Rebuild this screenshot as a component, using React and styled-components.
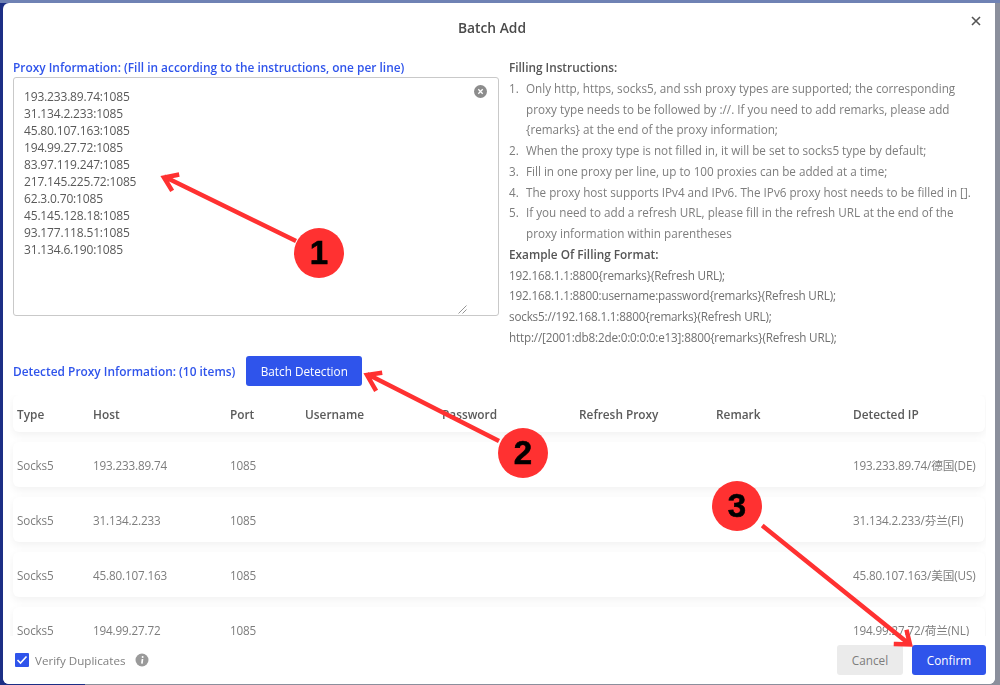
import React from "react";
import styled, { createGlobalStyle } from "styled-components";

const Global = createGlobalStyle`
  html, body { margin: 0; padding: 0; width: 1000px; height: 685px; overflow: hidden; }
  * { box-sizing: border-box; }
  body { font-family: "Open Sans", "Noto Sans CJK SC", sans-serif; font-size: 12px; }
`;

const Backdrop = styled.div`
  position: relative;
  width: 1000px;
  height: 685px;
  padding: 3px 5px 1px 3px;
  background: linear-gradient(90deg, #1c2f85 0, #1c2f85 85px, #8b8f9c 85px, #8b8f9c 100%);
  overflow: hidden;
`;

const TopEdge = styled.div`
  position: absolute;
  left: 0;
  top: 0;
  width: 100%;
  height: 3px;
  background: #6f82b4;
`;

const Dialog = styled.div`
  position: relative;
  height: 100%;
  display: flex;
  flex-direction: column;
  background: #fff;
  border-radius: 6px 0 6px 6px;
  overflow: hidden;
  filter: blur(0.3px);
`;

const Header = styled.header`
  flex: none;
  height: 54px;
  display: flex;
  align-items: center;
  justify-content: center;
  padding-right: 14px;
  padding-bottom: 6px;
`;

const Title = styled.h2`
  margin: 0;
  font-size: 13.8px;
  font-weight: 600;
  color: #4a4a4a;
`;

const CloseButton = styled.button`
  position: absolute;
  top: 11px;
  right: 12px;
  width: 14px;
  height: 14px;
  padding: 0;
  border: 0;
  background: none;
  display: flex;
  color: #555;
`;

const Body = styled.div`
  flex: none;
  display: flex;
  flex-direction: column;
  padding: 0 9px 0 10px;
`;

const TopGrid = styled.div`
  display: grid;
  grid-template-columns: 486px 1fr;
  column-gap: 10px;
  height: 300px;
`;

const InputColumn = styled.div`
  display: flex;
  flex-direction: column;
`;

const BlueLabel = styled.label`
  font-size: 11.9px;
  font-weight: 600;
  line-height: 20px;
  color: #2f54eb;
  white-space: nowrap;
`;

const TextareaWrap = styled.div`
  position: relative;
  display: flex;
`;

const ProxyInput = styled.textarea`
  width: 486px;
  height: 239px;
  padding: 10px;
  border: 1px solid #c9c9c9;
  border-radius: 3px;
  outline: none;
  resize: none;
  font: 12px/17px "Open Sans", sans-serif;
  letter-spacing: -0.17px;
  color: #595959;
  background: #fff;
  overflow: hidden;
`;

const ClearIcon = styled.span`
  position: absolute;
  top: 8px;
  right: 12px;
  display: flex;
`;

const ResizeGrip = styled.span`
  position: absolute;
  right: 32px;
  bottom: 2px;
  display: flex;
`;

const Instructions = styled.div`
  font-size: 11.7px;
  line-height: 20.75px;
  color: #7d7d7d;
  white-space: nowrap;
`;

const InfoHeading = styled.div`
  font-weight: 600;
  font-size: 11.8px;
  color: #555;
`;

const InfoList = styled.ol`
  margin: 0;
  padding: 0;
  list-style: none;
`;

const InfoItem = styled.li`
  display: flex;
`;

const ItemNumber = styled.span`
  flex: none;
  width: 17px;
`;

const ItemText = styled.span`
  white-space: normal;
  width: 450px;
`;

const ExampleLine = styled.div`
  font-size: 11.7px;
  letter-spacing: -0.18px;
  color: #707070;
`;

const DetectBar = styled.div`
  display: flex;
  align-items: center;
  gap: 11px;
  height: 30px;
  margin-top: -1px;
`;

const PrimaryButton = styled.button`
  width: ${(p) => p.$width}px;
  height: 30px;
  border: 0;
  border-radius: 3px;
  background: #2f54eb;
  color: #fff;
  font: 11.75px "Open Sans", sans-serif;
  padding: 0;
`;

const TableClip = styled.div`
  margin-top: 9px;
  height: 260px;
  margin-left: -3px;
  padding: 0 0 0 3px;
  overflow: hidden;
  display: flex;
  flex-direction: column;
  gap: 10px;
`;

const Row = styled.div`
  flex: none;
  width: 972px;
  height: ${(p) => (p.$head ? 37 : 45)}px;
  padding-left: 4px;
  display: grid;
  grid-template-columns: 76px 137px 75px 137px 137px 137px 137px 1fr;
  align-items: center;
  border-radius: 6px;
  background: #fff;
  box-shadow: 0 3px 8px rgba(0, 0, 0, 0.06);
  color: ${(p) => (p.$head ? "#5a5a5a" : "#7d7d7d")};
  font-weight: ${(p) => (p.$head ? 600 : 400)};
  font-size: ${(p) => (p.$head ? 11.85 : 11.7)}px;
  letter-spacing: ${(p) => (p.$head ? 0 : -0.15)}px;
  white-space: nowrap;
`;

const Footer = styled.footer`
  position: absolute;
  left: 0;
  right: 0;
  bottom: 0;
  height: 48px;
  padding: 0 9px 0 12px;
  background: #fff;
  display: flex;
  align-items: center;
  justify-content: space-between;
`;

const VerifyLabel = styled.div`
  display: flex;
  align-items: center;
  color: #808080;
  font-size: 11.6px;
`;

const Check = styled.span`
  width: 14px;
  height: 14px;
  margin-right: 6px;
  background: #2f54eb;
  border-radius: 1px;
  display: flex;
`;

const InfoDot = styled.span`
  margin-left: 10px;
  display: flex;
`;

const Actions = styled.div`
  display: flex;
  gap: 9px;
`;

const CancelButton = styled.button`
  width: 66px;
  height: 30px;
  border: 0;
  border-radius: 3px;
  background: #ebebeb;
  color: #7d7d7d;
  font: 11.75px "Open Sans", sans-serif;
  padding: 0;
`;

const Arrows = styled.svg`
  position: absolute;
  left: 0;
  top: 0;
  pointer-events: none;
`;

const Badge = styled.div`
  position: absolute;
  left: ${(p) => p.$x - 25}px;
  top: ${(p) => p.$y - 25}px;
  width: 50px;
  height: 50px;
  border-radius: 50%;
  background: #ff3131;
  color: #000;
  display: flex;
  align-items: center;
  justify-content: center;
  font: 700 33px "Liberation Sans", Arial, sans-serif;
  -webkit-text-stroke: 0.6px #000;
`;

const proxies = [
  "193.233.89.74:1085", "31.134.2.233:1085", "45.80.107.163:1085", "194.99.27.72:1085",
  "83.97.119.247:1085", "217.145.225.72:1085", "62.3.0.70:1085", "45.145.128.18:1085",
  "93.177.118.51:1085", "31.134.6.190:1085",
].join("\n");

const rows = [
  ["193.233.89.74", "193.233.89.74/德国(DE)"],
  ["31.134.2.233", "31.134.2.233/芬兰(FI)"],
  ["45.80.107.163", "45.80.107.163/美国(US)"],
  ["194.99.27.72", "194.99.27.72/荷兰(NL)"],
];

const items = [
  "Only http, https, socks5, and ssh proxy types are supported; the corresponding proxy type needs to be followed by ://. If you need to add remarks, please add {remarks} at the end of the proxy information;",
  "When the proxy type is not filled in, it will be set to socks5 type by default;",
  "Fill in one proxy per line, up to 100 proxies can be added at a time;",
  "The proxy host supports IPv4 and IPv6. The IPv6 proxy host needs to be filled in [].",
  "If you need to add a refresh URL, please fill in the refresh URL at the end of the proxy information within parentheses",
];

export default function App() {
  return (
    <>
      <Global />
      <Backdrop>
        <TopEdge />
        <Dialog>
          <Header>
            <Title>Batch Add</Title>
            <CloseButton aria-label="Close">
              <svg width="14" height="14" viewBox="0 0 14 14">
                <path d="M3 3l8 8M11 3l-8 8" stroke="currentColor" strokeWidth="1.6" fill="none" />
              </svg>
            </CloseButton>
          </Header>
          <Body>
            <TopGrid>
              <InputColumn>
                <BlueLabel>Proxy Information: (Fill in according to the instructions, one per line)</BlueLabel>
                <TextareaWrap>
                  <ProxyInput readOnly value={proxies} />
                  <ClearIcon>
                    <svg width="13" height="13" viewBox="0 0 13 13">
                      <circle cx="6.5" cy="6.5" r="6.5" fill="#8c8c8c" />
                      <path d="M4.3 4.3l4.4 4.4M8.7 4.3l-4.4 4.4" stroke="#fff" strokeWidth="1.3" />
                    </svg>
                  </ClearIcon>
                  <ResizeGrip>
                    <svg width="9" height="9" viewBox="0 0 9 9">
                      <path d="M0.5 8.5l8-8M4.5 8.5l4-4" stroke="#8a8a8a" strokeWidth="0.9" fill="none" />
                    </svg>
                  </ResizeGrip>
                </TextareaWrap>
              </InputColumn>
              <Instructions>
                <InfoHeading>Filling Instructions:</InfoHeading>
                <InfoList>
                  {items.map((t, i) => (
                    <InfoItem key={i}>
                      <ItemNumber>{i + 1}.</ItemNumber>
                      <ItemText>{t}</ItemText>
                    </InfoItem>
                  ))}
                </InfoList>
                <InfoHeading>Example Of Filling Format:</InfoHeading>
                <ExampleLine>192.168.1.1:8800{"{remarks}"}(Refresh URL);</ExampleLine>
                <ExampleLine>192.168.1.1:8800:username:password{"{remarks}"}(Refresh URL);</ExampleLine>
                <ExampleLine>socks5://192.168.1.1:8800{"{remarks}"}(Refresh URL);</ExampleLine>
                <ExampleLine>http://[2001:db8:2de:0:0:0:0:e13]:8800{"{remarks}"}(Refresh URL);</ExampleLine>
              </Instructions>
            </TopGrid>
            <DetectBar>
              <BlueLabel as="span">Detected Proxy Information: (10 items)</BlueLabel>
              <PrimaryButton $width={116}>Batch Detection</PrimaryButton>
            </DetectBar>
            <TableClip>
              <Row $head>
                <span>Type</span><span>Host</span><span>Port</span><span>Username</span>
                <span>Password</span><span>Refresh Proxy</span><span>Remark</span><span>Detected IP</span>
              </Row>
              {rows.map(([host, ip]) => (
                <Row key={host}>
                  <span>Socks5</span><span>{host}</span><span>1085</span><span /><span /><span /><span />
                  <span>{ip}</span>
                </Row>
              ))}
            </TableClip>
          </Body>
          <Footer>
            <VerifyLabel>
              <Check>
                <svg width="14" height="14" viewBox="0 0 14 14">
                  <path d="M2.5 7l3 3 6-6.5" stroke="#fff" strokeWidth="1.6" fill="none" />
                </svg>
              </Check>
              Verify Duplicates
              <InfoDot>
                <svg width="14" height="14" viewBox="0 0 14 14">
                  <circle cx="7" cy="7" r="6.5" fill="#9a9a9a" />
                  <circle cx="7.6" cy="3.9" r="1" fill="#fff" />
                  <path d="M7.5 6L6.9 10.6" stroke="#fff" strokeWidth="1.7" />
                </svg>
              </InfoDot>
            </VerifyLabel>
            <Actions>
              <CancelButton>Cancel</CancelButton>
              <PrimaryButton $width={74}>Confirm</PrimaryButton>
            </Actions>
          </Footer>
        </Dialog>
        <Arrows width="1000" height="685" viewBox="0 0 1000 685">
          <g stroke="#ff3131" strokeWidth="4.5" fill="none" strokeLinecap="square" strokeLinejoin="miter">
            <path d="M294 240L166 177.5M177 175L164 177.5L171 189" />
            <path d="M497 440L369 375M380 373L367 375L375 389" />
            <path d="M764 527L908 643M896 644L910 644.5L907 632" />
          </g>
        </Arrows>
        <Badge $x={319} $y={253}>1</Badge>
        <Badge $x={523} $y={453}>2</Badge>
        <Badge $x={737} $y={506}>3</Badge>
      </Backdrop>
    </>
  );
}
